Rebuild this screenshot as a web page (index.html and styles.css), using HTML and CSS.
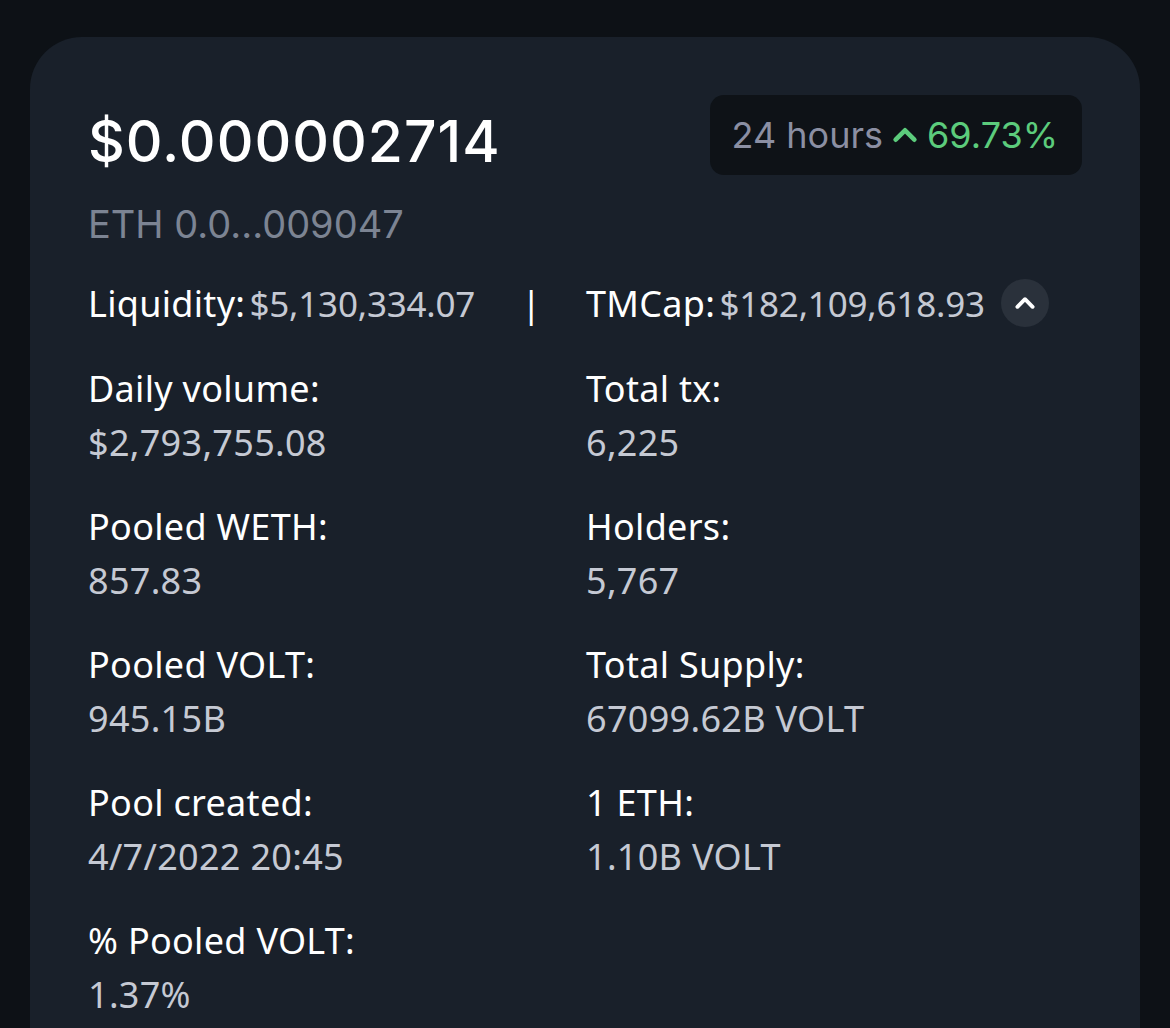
FILE: index.html
```html
<!DOCTYPE html>
<html lang="en">
<head>
    <meta charset="UTF-8">
    <title>VOLT token stats</title>
    <link rel="stylesheet" href="styles.css">
</head>
<body>

    <div class="card">
        <div class="price-head">
            <div>
                <div class="price">$0.000002714</div>
                <div class="price-eth">ETH 0.0...009047</div>
            </div>
            <div class="change">
                <span class="change-label">24 hours</span>
                <svg class="change-icon" viewBox="0 0 24 24" width="28" height="28">
                    <path d="M4 16 L12 8 L20 16" fill="none" stroke="currentColor" stroke-width="4" stroke-linecap="round" stroke-linejoin="round"/>
                </svg>
                <span class="change-value">69.73%</span>
            </div>
        </div>

        <div class="top-row">
            <div class="top-cell top-left">
                <span><span class="label">Liquidity:</span> <span class="value">$5,130,334.07</span></span>
                <span class="sep">|</span>
            </div>
            <div class="top-cell">
                <span><span class="label">TMCap:</span> <span class="value">$182,109,618.93</span></span>
                <button class="collapse">
                    <svg viewBox="0 0 24 24" width="26" height="26">
                        <path d="M5 15.5 L12 8.5 L19 15.5" fill="none" stroke="#fff" stroke-width="3.6" stroke-linecap="round" stroke-linejoin="round"/>
                    </svg>
                </button>
            </div>
        </div>

        <!-- stat rows -->
        <div class="stats">
            <div class="stat">
                <div class="label">Daily volume:</div>
                <div class="value">$2,793,755.08</div>
            </div>
            <div class="stat">
                <div class="label">Total tx:</div>
                <div class="value">6,225</div>
            </div>
            <div class="stat">
                <div class="label">Pooled WETH:</div>
                <div class="value">857.83</div>
            </div>
            <div class="stat">
                <div class="label">Holders:</div>
                <div class="value">5,767</div>
            </div>
            <div class="stat">
                <div class="label">Pooled VOLT:</div>
                <div class="value">945.15B</div>
            </div>
            <div class="stat">
                <div class="label">Total Supply:</div>
                <div class="value">67099.62B VOLT</div>
            </div>
            <div class="stat">
                <div class="label">Pool created:</div>
                <div class="value">4/7/2022 20:45</div>
            </div>
            <div class="stat">
                <div class="label">1 ETH:</div>
                <div class="value">1.10B VOLT</div>
            </div>
            <div class="stat">
                <div class="label">% Pooled VOLT:</div>
                <div class="value">1.37%</div>
            </div>
        </div>
    </div>

</body>
</html>
```

FILE: styles.css
```css
body {
    margin: 0;
    background: #0d1116;
    font-family: "Noto Sans", sans-serif;
    overflow: hidden;
}

.card {
    margin: 37px 30px 0 30px;
    background: #19202a;
    border-radius: 52px;
    padding: 71px 58px 60px 58px;
    min-height: 1100px;
}

.price-head {
    display: flex;
    justify-content: space-between;
    align-items: flex-start;
}

.price {
    font-family: Inter, sans-serif;
    font-weight: 500;
    font-size: 57px;
    line-height: 68px;
    color: #fff;
    letter-spacing: 1px;
}

.price-eth {
    font-family: Inter, sans-serif;
    font-size: 38px;
    line-height: 46px;
    color: #7c8493;
    margin-top: 25px;
}

.change {
    display: flex;
    align-items: center;
    gap: 8px;
    background: #0e1217;
    border-radius: 14px;
    padding: 0 24px 0 22px;
    height: 80px;
    margin-top: -13px;
    font-family: Inter, sans-serif;
    font-size: 36px;
}

.change-label {
    color: #8b8fa3;
}

.change-icon {
    color: #5ccc7c;
}

.change-value {
    color: #5ccc7c;
}

.label {
    color: #fff;
    font-size: 36px;
    letter-spacing: 0.3px;
}

.value {
    color: #c5c9d3;
    font-size: 36px;
    letter-spacing: 0.3px;
}

.top-row {
    display: grid;
    grid-template-columns: 498px 1fr;
    margin-top: 24px;
    height: 64px;
    align-items: center;
}

.top-cell {
    display: flex;
    align-items: center;
}

.top-left {
    justify-content: space-between;
    padding-right: 45px;
}

.top-row .value {
    font-size: 35px;
    letter-spacing: -0.2px;
}

.sep {
    color: #fff;
    font-size: 36px;
}

.collapse {
    width: 48px;
    height: 48px;
    border-radius: 50%;
    border: none;
    background: #2a313b;
    margin-left: 16px;
    padding: 0;
    display: flex;
    align-items: center;
    justify-content: center;
}

.stats {
    display: grid;
    grid-template-columns: 498px 1fr;
    row-gap: 30px;
    margin-top: 27px;
}

.stat .label {
    line-height: 54px;
}

.stat .value {
    line-height: 54px;
}
```
